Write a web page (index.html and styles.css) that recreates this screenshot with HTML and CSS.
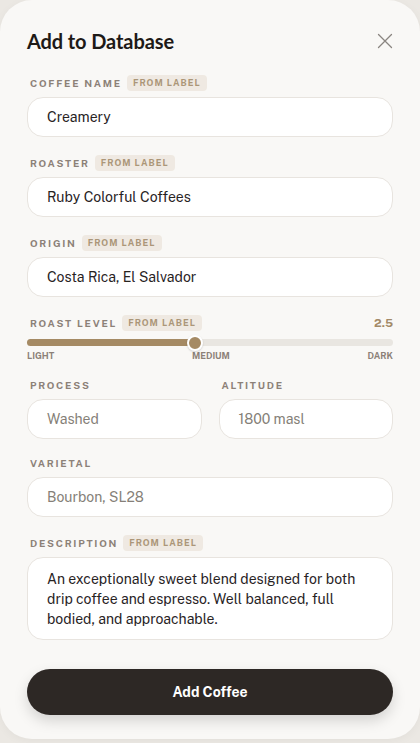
FILE: index.html
```html
<!DOCTYPE html>
<html>
<head>
<meta charset="utf-8">
<link rel="stylesheet" href="styles.css">
</head>
<body>
<div class="sheet">
  <div class="header">
    <h1 class="title">Add to Database</h1>
    <svg class="close" width="16" height="16" viewBox="0 0 16 16"><path d="M1.5 1.5L14.5 14.5M14.5 1.5L1.5 14.5" stroke="#8a8580" stroke-width="1.3" stroke-linecap="round"/></svg>
  </div>

  <div class="field">
    <div class="label-row"><span class="label">Coffee Name</span><span class="badge">From Label</span></div>
    <div class="input">Creamery</div>
  </div>
  <div class="field">
    <div class="label-row"><span class="label">Roaster</span><span class="badge">From Label</span></div>
    <div class="input">Ruby Colorful Coffees</div>
  </div>
  <div class="field">
    <div class="label-row"><span class="label">Origin</span><span class="badge">From Label</span></div>
    <div class="input">Costa Rica, El Salvador</div>
  </div>

  <div class="field roast">
    <div class="label-row"><span class="label">Roast Level</span><span class="badge">From Label</span><span class="value">2.5</span></div>
    <div class="slider">
      <div class="fill" style="width: 46%"></div>
      <div class="thumb" style="left: 46%"></div>
    </div>
    <div class="ticks"><span>Light</span><span>Medium</span><span>Dark</span></div>
  </div>

  <div class="pair">
    <div class="field">
      <div class="label-row"><span class="label">Process</span></div>
      <div class="input placeholder">Washed</div>
    </div>
    <div class="field">
      <div class="label-row"><span class="label">Altitude</span></div>
      <div class="input placeholder">1800 masl</div>
    </div>
  </div>

  <div class="field">
    <div class="label-row"><span class="label">Varietal</span></div>
    <div class="input placeholder">Bourbon, SL28</div>
  </div>

  <div class="field">
    <div class="label-row"><span class="label">Description</span><span class="badge">From Label</span></div>
    <div class="input textarea">An exceptionally sweet blend designed for both drip coffee and espresso. Well balanced, full bodied, and approachable.</div>
  </div>

  <button class="submit">Add Coffee</button>
</div>
</body>
</html>
```

FILE: styles.css
```css
* { box-sizing: border-box; }
html, body { margin: 0; padding: 0; }
body {
  background: #ebe8e3;
  width: 420px;
  height: 743px;
  overflow: hidden;
  font-family: "Public Sans", Inter, "Liberation Sans", sans-serif;
}
.sheet {
  background: #f9f8f6;
  height: 739px;
  border-radius: 32px;
  padding: 28px 27px 0 27px;
  display: flex;
  flex-direction: column;
  box-shadow: 0 2px 10px rgba(0,0,0,0.04);
}
.header {
  display: flex;
  align-items: center;
  justify-content: space-between;
  height: 26px;
  margin-bottom: 21px;
}
.title {
  margin: 0;
  font-family: Lato, "Liberation Sans", sans-serif;
  font-weight: 700;
  font-size: 20px;
  color: #1e1a17;
  letter-spacing: -0.1px;
}
.close { margin-right: 0; }
.field { display: flex; flex-direction: column; margin-bottom: 18px; }
.label-row {
  display: flex;
  align-items: center;
  height: 16px;
  margin-bottom: 6px;
  padding-left: 3px;
}
.label {
  font-size: 10px;
  font-weight: 700;
  letter-spacing: 1.75px;
  text-transform: uppercase;
  color: #8c8178;
}
.badge {
  margin-left: 5px;
  background: #efe9e2;
  color: #ab9678;
  font-size: 9px;
  font-weight: 700;
  letter-spacing: 1px;
  text-transform: uppercase;
  padding: 0 6px;
  height: 16px;
  line-height: 16px;
  border-radius: 4px;
}
.value {
  margin-left: auto;
  font-size: 12px;
  font-weight: 700;
  color: #a38a68;
}
.input {
  background: #fff;
  border: 1px solid #e8e4df;
  border-radius: 16px;
  height: 40px;
  padding: 0 19px;
  display: flex;
  align-items: center;
  font-size: 14px;
  color: #28231f;
}
.placeholder { color: #857f78; }
.textarea {
  height: 83px;
  align-items: flex-start;
  padding-top: 11px;
  line-height: 20px;
}
.roast { margin-bottom: 16px; }
.roast .label-row { margin-bottom: 8px; }
.slider {
  position: relative;
  height: 7px;
  background: #e9e6e1;
  border-radius: 4px;
  margin-bottom: 4px;
}
.fill {
  height: 100%;
  background: #a58a64;
  border-radius: 4px;
}
.thumb {
  position: absolute;
  top: 50%;
  width: 16px;
  height: 16px;
  margin-left: -8px;
  margin-top: -8px;
  background: #a58a64;
  border: 2px solid #fff;
  border-radius: 50%;
  box-shadow: 0 1px 2px rgba(0,0,0,0.15);
}
.ticks {
  display: flex;
  justify-content: space-between;
  font-size: 9px;
  line-height: 11px;
  font-weight: 700;
  color: #8c8178;
  text-transform: uppercase;
}
.pair {
  display: grid;
  grid-template-columns: 1fr 1fr;
  gap: 17px;
}
.pair .field { margin-bottom: 16px; }
.submit {
  margin-top: 11px;
  height: 46px;
  border: none;
  border-radius: 23px;
  background: #2d2825;
  color: #fff;
  font-family: inherit;
  font-size: 14px;
  font-weight: 700;
  box-shadow: 0 6px 14px rgba(0,0,0,0.15);
}
```
